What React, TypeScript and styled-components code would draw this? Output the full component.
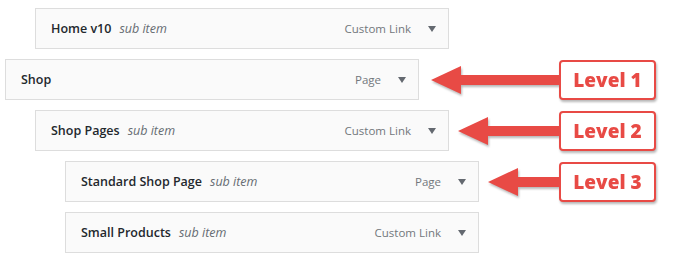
import styled, { createGlobalStyle } from 'styled-components'

const GlobalStyle = createGlobalStyle`
  body {
    margin: 0;
    background: #ffffff;
    font-family: 'Open Sans', 'Noto Sans', sans-serif;
  }
`

type MenuEntry = {
  title: string
  sub?: boolean
  type: string
  depth: number
  level?: number
  arrowGap?: number
}

const entries: MenuEntry[] = [
  { title: 'Home v10', sub: true, type: 'Custom Link', depth: 1 },
  { title: 'Shop', type: 'Page', depth: 0, level: 1, arrowGap: 12 },
  { title: 'Shop Pages', sub: true, type: 'Custom Link', depth: 1, level: 2, arrowGap: 9 },
  { title: 'Standard Shop Page', sub: true, type: 'Page', depth: 2, level: 3, arrowGap: 9 },
  { title: 'Small Products', sub: true, type: 'Custom Link', depth: 2 },
]

export default function App() {
  return (
    <Page>
      <GlobalStyle />
      {entries.map((entry) => (
        <Row key={entry.title}>
          <MenuItem $depth={entry.depth}>
            <Title>{entry.title}</Title>
            {entry.sub && <SubLabel>sub item</SubLabel>}
            <TypeLabel>{entry.type}</TypeLabel>
            <Toggle />
          </MenuItem>
          {entry.level && (
            <Annotation $gap={entry.arrowGap ?? 10}>
              <ArrowHead viewBox="0 0 30 28" width="30" height="28">
                <polygon points="0,14 30,0 30,28" fill="#e84a45" />
              </ArrowHead>
              <Shaft />
              <LevelBox>Level {entry.level}</LevelBox>
            </Annotation>
          )}
        </Row>
      ))}
    </Page>
  )
}

const Page = styled.div`
  display: flex;
  flex-direction: column;
  gap: 10px;
  padding-top: 8px;
  width: 696px;
`
const Row = styled.div`
  display: flex;
  align-items: center;
  height: 41px;
`
const MenuItem = styled.div<{ $depth: number }>`
  box-sizing: border-box;
  flex: none;
  margin-left: ${(p) => 5 + p.$depth * 30}px;
  width: 414px;
  height: 41px;
  display: flex;
  align-items: center;
  padding: 0 12px 0 15px;
  background: #fafafa;
  border: 1px solid #dddddd;
`
const Title = styled.span`
  font-size: 12.5px;
  font-weight: 600;
  color: #23282d;
`
const SubLabel = styled.span`
  margin-left: 8px;
  font-size: 12.5px;
  font-style: italic;
  color: #666c72;
`
const TypeLabel = styled.span`
  margin-left: auto;
  font-size: 11.5px;
  color: #72777c;
`
const Toggle = styled.span`
  margin-left: 17px;
  width: 0;
  height: 0;
  border-left: 4px solid transparent;
  border-right: 4px solid transparent;
  border-top: 6px solid #646970;
`
const Annotation = styled.div<{ $gap: number }>`
  flex: 1;
  display: flex;
  align-items: center;
  margin-left: ${(p) => p.$gap}px;
  margin-right: 40px;
  filter: drop-shadow(1px 2px 1px rgba(0, 0, 0, 0.28));
`
const ArrowHead = styled.svg`
  flex: none;
  display: block;
`
const Shaft = styled.div`
  flex: 1;
  height: 10px;
  background: #e84a45;
`
const LevelBox = styled.div`
  box-sizing: border-box;
  flex: none;
  width: 97px;
  height: 40px;
  display: flex;
  align-items: center;
  justify-content: center;
  background: #ffffff;
  border: 2px solid #e84a45;
  border-radius: 4px;
  color: #e84a45;
  font-family: 'Open Sans', sans-serif;
  font-weight: 800;
  font-size: 19px;
`
